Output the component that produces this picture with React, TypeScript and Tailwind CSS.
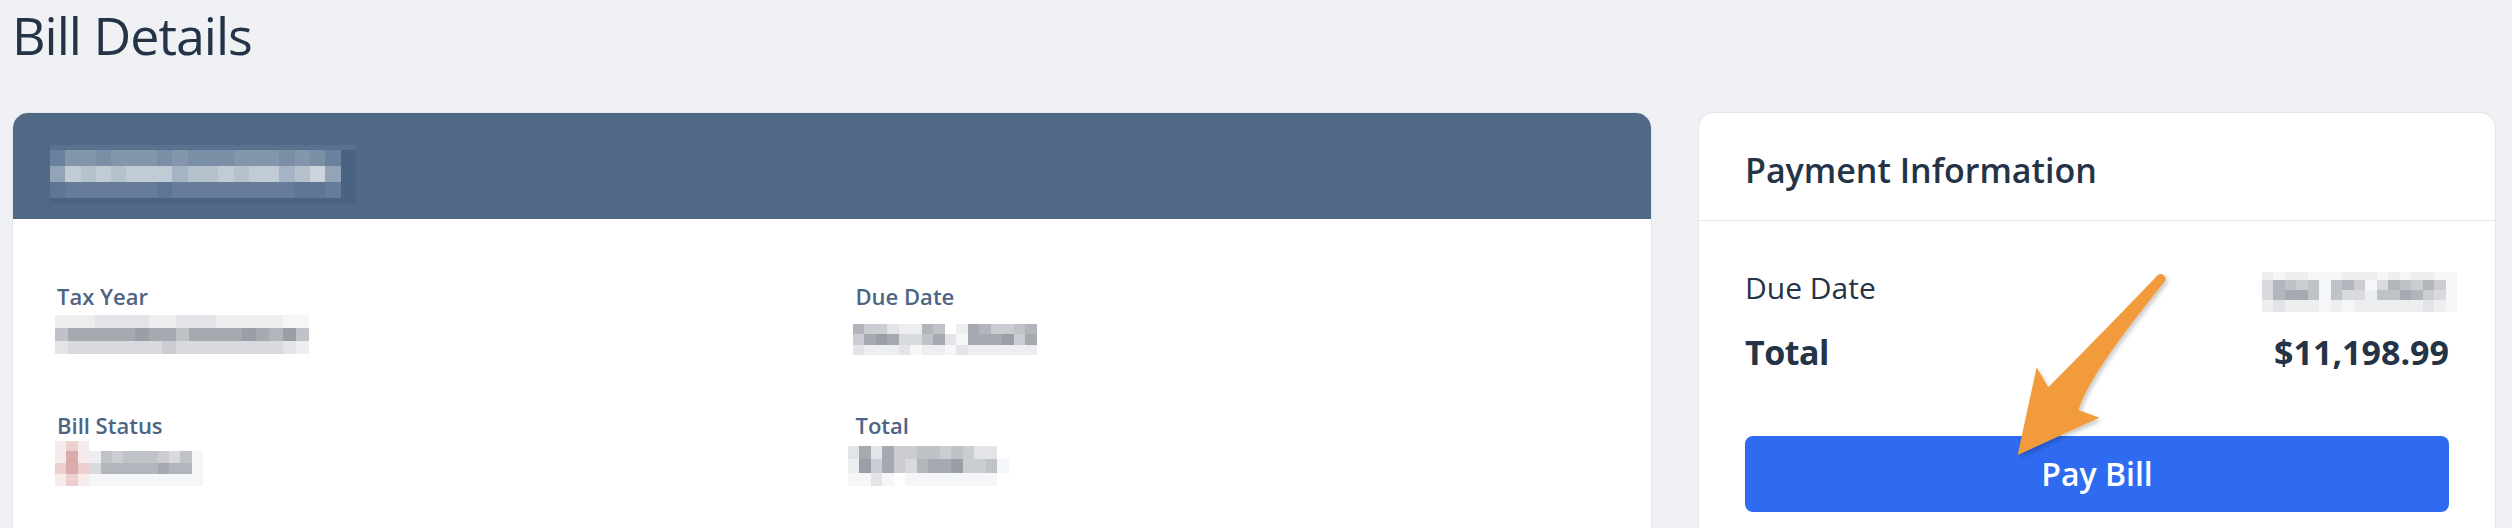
import React from "react";

type Row = { h: number; s: string };

const GRAY: Record<string, string> = {
  "0": "#ffffff",
  "1": "#f5f6f7",
  "2": "#eceef0",
  "3": "#e2e4e7",
  "4": "#d8dade",
  "5": "#cbcdd2",
  "6": "#bfc2c7",
  "7": "#b2b5bc",
  "8": "#a6a9b0",
  "9": "#9a9ea6",
  p: "#f7eaea",
  q: "#ecd0d0",
  r: "#dcabab",
};

const SLATE: Record<string, string> = {
  a: "#5a7290",
  b: "#6b829e",
  c: "#8396ac",
  d: "#7a8ea6",
  e: "#c0cbd6",
  f: "#b5c2ce",
  g: "#a5b4c4",
  h: "#ccd5de",
  i: "#667c99",
  j: "#5e7593",
  k: "#4b6383",
  l: "#93a4b8",
};

function Mosaic({
  cw,
  rows,
  palette,
  className = "",
}: {
  cw: number;
  rows: Row[];
  palette: Record<string, string>;
  className?: string;
}) {
  return (
    <div className={"flex flex-col " + className}>
      {rows.map((r, i) => (
        <div key={i} className="flex" style={{ height: r.h }}>
          {r.s.split("").map((ch, j) => (
            <div
              key={j}
              className="shrink-0"
              style={{ width: cw, background: palette[ch] }}
            />
          ))}
        </div>
      ))}
    </div>
  );
}

const headerRows: Row[] = [
  { h: 5, s: "aaaaaaaaaaaaaaaaaaaa" },
  { h: 16, s: "bccdcccdcdddcccdcdbk" },
  { h: 16, s: "lefefeeegffefeegfhlk" },
  { h: 16, s: "jiiiiiijiiiiiiiijjik" },
  { h: 5, s: "kkkkkkkkkkkkkkkkkkkk" },
];

const taxYearRows: Row[] = [
  { h: 13, s: "2223333223332222211" },
  { h: 13, s: "6888889886888898796" },
  { h: 13, s: "3444444454444444432" },
];

const billStatusRows: Row[] = [
  { h: 10, s: "pqp0000000000" },
  { h: 12, s: "prp2656665461" },
  { h: 11, s: "qrq4777778771" },
  { h: 12, s: "pqp1111111111" },
];

const dueDateRows: Row[] = [
  { h: 10, s: "7553227602875567" },
  { h: 11, s: "5898446831888958" },
  { h: 10, s: "3222312213222222" },
];

const totalRows: Row[] = [
  { h: 13, s: "383855665653300" },
  { h: 14, s: "295854788955610" },
  { h: 13, s: "113101111111100" },
];

const payDueRows: Row[] = [
  { h: 8, s: "21221112221212211" },
  { h: 10, s: "47656167514765751" },
  { h: 10, s: "47886164426687541" },
  { h: 12, s: "23222121222222321" },
];

function Field({
  label,
  children,
}: {
  label: string;
  children: React.ReactNode;
}) {
  return (
    <div>
      <div className="text-[22px] font-semibold leading-[30px] text-[#4d6585]">
        {label}
      </div>
      {children}
    </div>
  );
}

export default function App() {
  return (
    <div className="relative min-h-[528px] bg-[#eff1f5] pl-[12px] pr-[16px] font-['Open_Sans','Noto_Sans',sans-serif] text-[#253347]">
      <h1 className="text-[52px] font-normal leading-[70px] tracking-[-1px] text-[#253347]">
        Bill Details
      </h1>

      <div className="mt-[42px] flex items-start gap-[46px]">
        {/* Left card */}
        <div className="flex-1 overflow-hidden rounded-[16px] border border-[#e4e7ec] bg-white">
          <div className="h-[106px] bg-[#506a86] pl-[37px] pt-[32px]">
            <Mosaic cw={15.3} rows={headerRows} palette={SLATE} />
          </div>
          <div className="grid grid-cols-2 gap-x-[47px] gap-y-[55px] px-[44px] pb-[60px] pt-[62px]">
            <Field label="Tax Year">
              <Mosaic
                className="-ml-[2px] mt-[4px]"
                cw={13.4}
                rows={taxYearRows}
                palette={GRAY}
              />
            </Field>
            <Field label="Due Date">
              <Mosaic
                className="-ml-[3px] mt-[13px]"
                cw={11.5}
                rows={dueDateRows}
                palette={GRAY}
              />
            </Field>
            <Field label="Bill Status">
              <Mosaic
                className="-ml-[2px] mt-[1px]"
                cw={11.4}
                rows={billStatusRows}
                palette={GRAY}
              />
            </Field>
            <Field label="Total">
              <Mosaic
                className="-ml-[8px] mt-[6px]"
                cw={11.5}
                rows={totalRows}
                palette={GRAY}
              />
            </Field>
          </div>
        </div>

        {/* Right card */}
        <div className="w-[798px] shrink-0 rounded-[16px] border border-[#e3e6eb] bg-white">
          <div className="border-b border-[#e3e6eb] px-[46px] pb-[27px] pt-[34px]">
            <h2 className="text-[34px] font-semibold leading-[46px] text-[#253347]">
              Payment Information
            </h2>
          </div>
          <div className="px-[46px] pb-[48px] pt-[47px]">
            <div className="flex items-start justify-between">
              <span className="text-[30px] leading-[40px]">Due Date</span>
              <Mosaic
                className="-mr-[8px] mt-[4px]"
                cw={11.5}
                rows={payDueRows}
                palette={GRAY}
              />
            </div>
            <div className="mt-[17px] flex items-center justify-between text-[34px] font-bold leading-[46px]">
              <span className="tracking-[-0.5px]">Total</span>
              <span>$11,198.99</span>
            </div>
            <button className="mt-[61px] h-[76px] w-full rounded-[8px] bg-[#2f6bf0] text-[32px] font-semibold text-white">
              Pay Bill
            </button>
          </div>
        </div>
      </div>

      {/* Annotation arrow */}
      <svg
        className="pointer-events-none absolute left-[1980px] top-[260px] h-[220px] w-[220px]"
        viewBox="0 0 660 660"
      >
        <defs>
          <filter id="arrowShadow" x="-20%" y="-20%" width="140%" height="140%">
            <feDropShadow dx="6" dy="8" stdDeviation="6" floodColor="#000" floodOpacity="0.22" />
          </filter>
        </defs>
        <path
          d="M 533 46 Q 400 185 205 382 L 170 322 L 113 585 L 358 473 L 296 450 C 322 368 405 250 555 64 A 14.5 14.5 0 0 0 533 46 Z"
          fill="#f19b3d"
          filter="url(#arrowShadow)"
        />
      </svg>
    </div>
  );
}
